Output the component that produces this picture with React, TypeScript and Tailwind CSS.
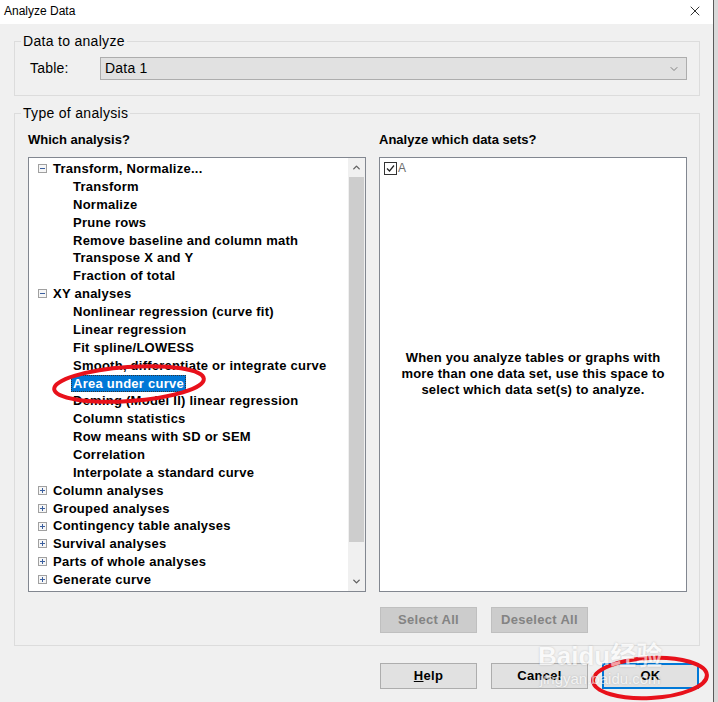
import { ChevronDown, ChevronUp, X } from "lucide-react";

const font = { fontFamily: '"Liberation Sans", Arial, sans-serif' };

type Node = { label: string; open?: boolean; children?: string[] };

const tree: Node[] = [
  {
    label: "Transform, Normalize...",
    open: true,
    children: [
      "Transform",
      "Normalize",
      "Prune rows",
      "Remove baseline and column math",
      "Transpose X and Y",
      "Fraction of total",
    ],
  },
  {
    label: "XY analyses",
    open: true,
    children: [
      "Nonlinear regression (curve fit)",
      "Linear regression",
      "Fit spline/LOWESS",
      "Smooth, differentiate or integrate curve",
      "Area under curve",
      "Deming (Model II) linear regression",
      "Column statistics",
      "Row means with SD or SEM",
      "Correlation",
      "Interpolate a standard curve",
    ],
  },
  { label: "Column analyses" },
  { label: "Grouped analyses" },
  { label: "Contingency table analyses" },
  { label: "Survival analyses" },
  { label: "Parts of whole analyses" },
  { label: "Generate curve" },
];

const Toggle = ({ open }: { open?: boolean }) => (
  <span className="relative mr-[6px] flex h-[9px] w-[9px] shrink-0 items-center justify-center border border-[#a0a0a0] bg-[#f6f6f6]">
    <span className="absolute h-px w-[5px] bg-[#3b5f9e]" />
    {!open && <span className="absolute h-[5px] w-px bg-[#3b5f9e]" />}
  </span>
);

const GroupBox = ({ title, className, children }: any) => (
  <fieldset className={`border border-[#dcdcdc] ${className}`}>
    <legend className="ml-[6px] px-[2px] text-[14px] leading-[16px] tracking-[0.3px] text-black">
      {title}
    </legend>
    {children}
  </fieldset>
);

const Button = ({ children, disabled, primary }: any) => (
  <div
    className={`flex h-[26px] w-[97px] items-center justify-center text-[13px] font-bold tracking-[0.3px] ${
      disabled
        ? "border border-[#bfbfbf] bg-[#cccccc] text-[#838383]"
        : primary
          ? "border-2 border-[#0078d7] bg-[#e1e1e1] text-black"
          : "border border-[#adadad] bg-[#e1e1e1] text-black"
    }`}
  >
    {children}
  </div>
);

const AnalysisTree = () => {
  return (
    <div className="flex h-[435px] w-[338px] border border-[#828790] bg-white">
      <div className="flex-1 pt-[2px] text-[13px] font-bold tracking-[0.25px] text-black">
        {tree.map((node) => (
          <div key={node.label}>
            <div className="flex h-[17.87px] items-center pl-[9px]">
              <Toggle open={node.open} />
              <span>{node.label}</span>
            </div>
            {node.open &&
              node.children?.map((c) => (
                <div key={c} className="flex h-[17.87px] items-center pl-[44px]">
                  {c === "Area under curve" ? (
                    <span className="-ml-[2px] border border-dotted border-[#333] bg-[#0078d7] px-px leading-[15px] text-white">
                      {c}
                    </span>
                  ) : (
                    <span>{c}</span>
                  )}
                </div>
              ))}
          </div>
        ))}
      </div>
      <div className="flex w-[17px] flex-col bg-[#f0f0f0]">
        <div className="flex h-[19px] items-center justify-center text-[#606060]">
          <ChevronUp size={11} strokeWidth={3} />
        </div>
        <div className="mx-[1px] h-[365px] bg-[#cdcdcd]" />
        <div className="flex-1" />
        <div className="flex h-[19px] items-center justify-center text-[#606060]">
          <ChevronDown size={11} strokeWidth={3} />
        </div>
      </div>
    </div>
  );
};

const App = () => {
  return (
    <div className="relative flex h-[702px] w-[718px] bg-[#f0f0f0]" style={font}>
      <div className="flex w-[713px] flex-col">
        <div className="flex h-[24px] items-center justify-between bg-white pb-[2px] pl-[4px] pr-[10px] text-[12px] text-black">
          <span>Analyze Data</span>
          <X size={16} strokeWidth={1.2} />
        </div>

        <div className="flex flex-col pl-[14px] pr-[13px]">
          <GroupBox title="Data to analyze" className="mt-[9px] pb-[15px]">
            <div className="mt-[8px] flex items-center pl-[15px] pr-[12px]">
              <span className="w-[70px] text-[14px] tracking-[0.2px]">Table:</span>
              <div className="flex h-[23px] flex-1 items-center justify-between border border-[#adadad] bg-[#e1e1e1] pl-[4px] pr-[6px] text-[14px] tracking-[0.2px]">
                <span>Data 1</span>
                <ChevronDown size={12} strokeWidth={1.5} className="text-[#606060]" />
              </div>
            </div>
          </GroupBox>

          <GroupBox title="Type of analysis" className="mt-[9px] pb-[12px]">
            <div className="mt-[11px] flex gap-[13px] pl-[13px] text-[13px] font-bold">
              <div className="flex flex-col">
                <div className="mb-[9px] h-[16px] leading-[16px]">Which analysis?</div>
                <AnalysisTree />
              </div>
              <div className="flex flex-col">
                <div className="mb-[9px] h-[16px] leading-[16px]">Analyze which data sets?</div>
                <div className="relative flex h-[435px] w-[308px] items-center justify-center border border-[#828790] bg-white">
                  <div className="absolute left-[4px] top-[3px] flex items-center gap-[1px] font-normal text-[#6d6d6d]">
                    <span className="flex h-[13px] w-[13px] items-center justify-center border border-[#333] bg-white">
                      <svg width="9" height="9" viewBox="0 0 9 9">
                        <path d="M1 4.5 L3.5 7 L8 1.5" fill="none" stroke="#222" strokeWidth="1.2" />
                      </svg>
                    </span>
                    <span className="text-[12px] leading-[14px]">A</span>
                  </div>
                  <p className="-mt-[2px] text-center text-[13px] leading-[16px] tracking-[0.2px]">
                    When you analyze tables or graphs with
                    <br />
                    more than one data set, use this space to
                    <br />
                    select which data set(s) to analyze.
                  </p>
                </div>
                <div className="mt-[15px] flex gap-[14px] pl-px">
                  <Button disabled>Select All</Button>
                  <Button disabled>Deselect All</Button>
                </div>
              </div>
            </div>
          </GroupBox>

          <div className="mt-[17px] flex gap-[14px] pl-[366px]">
            <Button>
              <span>
                <span className="underline">H</span>elp
              </span>
            </Button>
            <Button>Cancel</Button>
            <Button primary>OK</Button>
          </div>
        </div>
      </div>
      <div className="w-[5px] border-l border-[#5a5a5a] bg-[#d9d9d9]" />

      <svg className="pointer-events-none absolute left-0 top-0" width="718" height="702">
        <ellipse cx="129" cy="384" rx="75" ry="17" fill="none" stroke="#e8111b" strokeWidth="4" transform="rotate(-4 129 384)" />
        <ellipse cx="650" cy="678" rx="57" ry="20" fill="none" stroke="#e8111b" strokeWidth="4" transform="rotate(-3 650 678)" />
      </svg>

      <div className="pointer-events-none absolute left-[538px] top-[642px] flex flex-col items-center text-white opacity-60 [text-shadow:0_0_2px_rgba(0,0,0,0.3)]">
        <span className="text-[26px] font-bold leading-[28px]" style={{ fontFamily: '"Liberation Sans", "Noto Sans CJK SC", sans-serif' }}>
          Baidu经验
        </span>
        <span className="text-[15px] leading-[18px]">jingyan.baidu.com</span>
      </div>
    </div>
  );
};

export default App;
